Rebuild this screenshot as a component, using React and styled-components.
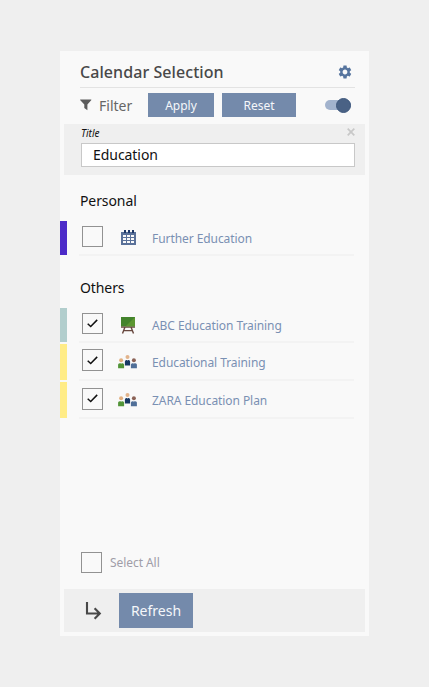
import React, { useState } from 'react'
import styled, { createGlobalStyle, ThemeProvider } from 'styled-components'

const theme = {
  colors: {
    page: '#efefef',
    panel: '#f9f9f9',
    primary: '#748aab',
    name: '#7a90b3',
    dark: '#4a6285',
    text: '#484848',
    muted: '#a09da8',
    line: '#f3f3f3',
  },
}

const GlobalStyle = createGlobalStyle`
  * {
    box-sizing: border-box;
  }
  body {
    margin: 0;
    background: #efefef;
    font-family: 'Noto Sans', 'Open Sans', sans-serif;
  }
  button,
  input {
    font-family: inherit;
  }
`

const Page = styled.main`
  width: 429px;
  height: 687px;
  padding: 51px 60px;
  background: ${({ theme }) => theme.colors.page};
`

const Panel = styled.section`
  display: flex;
  flex-direction: column;
  width: 309px;
  height: 585px;
  padding-bottom: 4px;
  background: ${({ theme }) => theme.colors.panel};
`

const Header = styled.header`
  display: flex;
  align-items: center;
  justify-content: space-between;
  height: 37px;
  margin: 0 14px 0 20px;
  padding: 5px 2px 0 0;
  border-bottom: 1px solid #e3e3e3;
`

const Title = styled.h1`
  margin: 0;
  font-size: 16px;
  font-weight: 500;
  line-height: 22px;
  letter-spacing: 0.07px;
  color: ${({ theme }) => theme.colors.text};
`

const Toolbar = styled.div`
  display: flex;
  align-items: center;
  height: 24px;
  margin: 5px 18px 7px 20px;
`

const FilterLabel = styled.span`
  width: 49px;
  margin-left: 7px;
  padding-top: 2px;
  font-size: 14px;
  line-height: 24px;
  color: #666;
`

const Button = styled.button`
  width: ${({ $width }) => $width};
  height: ${({ $large }) => ($large ? '35px' : '24px')};
  margin-right: 8px;
  padding: ${({ $large }) => ($large ? '0' : '1px 0 0')};
  border: 0;
  background: ${({ theme }) => theme.colors.primary};
  color: #f5f7fa;
  font-size: ${({ $large }) => ($large ? '14px' : '12px')};
  line-height: 23px;
`

const Toggle = styled.button`
  display: flex;
  align-items: center;
  justify-content: flex-end;
  width: 26px;
  height: 10px;
  margin-left: auto;
  padding: 0;
  border: 0;
  border-radius: 5px;
  background: #a2b3cd;
`

const Knob = styled.span`
  flex: none;
  width: 15px;
  height: 15px;
  border-radius: 50%;
  background: ${({ theme }) => theme.colors.dark};
  border: 1px solid #3e587d;
`

const FilterBox = styled.div`
  height: 51px;
  margin: 0 4px;
  padding: 2px 10px 0 17px;
  background: ${({ theme }) => theme.colors.page};
`

const FilterHead = styled.div`
  display: flex;
  justify-content: space-between;
  height: 17px;
  font-size: 10px;
  font-style: italic;
  line-height: 15px;
  color: #111;
`

const Clear = styled.svg`
  width: 8px;
  height: 8px;
  margin-top: 2px;
`

const Input = styled.input`
  display: block;
  width: 274px;
  height: 24px;
  padding: 0 11px 2px;
  border: 1px solid #c8c8c8;
  border-radius: 0;
  outline: 0;
  background: #fff;
  color: #111;
  font-size: 14px;
  letter-spacing: -0.05px;
`

const Group = styled.section`
  padding-top: ${({ $top }) => $top};
`

const GroupTitle = styled.h2`
  margin: 0 0 10px 20px;
  font-size: 14px;
  font-weight: 400;
  line-height: 20px;
  letter-spacing: -0.1px;
  color: #111;
`

const Row = styled.div`
  display: flex;
  height: ${({ $height }) => $height};
  margin-bottom: 2px;
  border-left: 7px solid ${({ $color }) => $color};
`

const RowBody = styled.div`
  display: flex;
  align-items: center;
  width: 275px;
  height: 100%;
  margin-left: 12px;
  padding-left: 3px;
  box-shadow: 0 1px 0 ${({ theme }) => theme.colors.line}, inset 0 -1px 0 ${({ theme }) => theme.colors.line};
`

const Check = styled.button`
  display: grid;
  place-items: center;
  flex: none;
  width: 21px;
  height: ${({ $height = '21px' }) => $height};
  margin-bottom: ${({ $lift = '3px' }) => $lift};
  padding: 0;
  border: 1px solid #929292;
  background: transparent;
`

const IconSlot = styled.span`
  display: grid;
  place-items: center;
  width: 49px;
  padding: ${({ $icon }) => ({ calendar: '0 0 1px 1px', team: '0 0 1px' })[$icon] || '0'};
`

const Name = styled.span`
  padding-top: 2px;
  font-size: 12px;
  line-height: 18px;
  letter-spacing: -0.07px;
  color: ${({ theme }) => theme.colors.name};
`

const SelectAll = styled.div`
  display: flex;
  align-items: center;
  gap: 8px;
  height: 21px;
  margin: auto 0 16px 21px;
  color: ${({ theme }) => theme.colors.muted};
  font-size: 12px;
  letter-spacing: -0.06px;
`

const Footer = styled.footer`
  display: flex;
  align-items: center;
  gap: 17px;
  height: 43px;
  margin: 0 4px;
  padding-left: 21px;
  background: ${({ theme }) => theme.colors.page};
`

const GearIcon = () => (
  <svg width="16" height="16" viewBox="0 0 24 24" fill="#56749e">
    <path d="M19.14 12.94c.04-.3.06-.61.06-.94 0-.32-.02-.64-.07-.94l2.03-1.58c.18-.14.23-.41.12-.61l-1.92-3.32c-.12-.22-.37-.29-.59-.22l-2.39.96c-.5-.38-1.03-.7-1.62-.94l-.36-2.54c-.04-.24-.24-.41-.48-.41h-3.84c-.24 0-.43.17-.47.41l-.36 2.54c-.59.24-1.13.57-1.62.94l-2.39-.96c-.22-.08-.47 0-.59.22L2.74 8.87c-.12.21-.08.47.12.61l2.03 1.58c-.05.3-.09.63-.09.94s.02.64.07.94l-2.03 1.58c-.18.14-.23.41-.12.61l1.92 3.32c.12.22.37.29.59.22l2.39-.96c.5.38 1.03.7 1.62.94l.36 2.54c.05.24.24.41.48.41h3.84c.24 0 .44-.17.47-.41l.36-2.54c.59-.24 1.13-.56 1.62-.94l2.39.96c.22.08.47 0 .59-.22l1.92-3.32c.12-.22.07-.47-.12-.61l-2.01-1.58zM12 15.6c-1.98 0-3.6-1.62-3.6-3.6s1.62-3.6 3.6-3.6 3.6 1.62 3.6 3.6-1.62 3.6-3.6 3.6z" />
  </svg>
)

const FunnelIcon = () => (
  <svg width="12" height="12" viewBox="0 0 12 12" fill="#5c5c5c">
    <path d="M.5.5h10.4c.5 0 .6.5.3.8L7.4 5.5v5.7L4.3 9V5.5L.3 1.3C0 1 .1.5.5.5z" />
  </svg>
)

const CheckMark = () => (
  <svg width="11" height="9" viewBox="0 0 11 9" fill="none" stroke="#111" strokeWidth="1.5">
    <path d="M.7 4.8l3 2.7L10.2.9" />
  </svg>
)

const CalendarIcon = () => (
  <svg width="15" height="15" viewBox="0 0 15 15" shapeRendering="crispEdges">
    <path fill="#5a7199" d="M0 2h15v13H0z" />
    <path fill="#f9f9f9" d="M2 5h3v2H2zM6 5h3v2H6zM10 5h3v2h-3zM2 8h3v2H2zM6 8h3v2H6zM10 8h3v2h-3zM2 11h3v2H2zM6 11h3v2H6zM10 11h3v2h-3z" />
    <path fill="#1d3767" d="M3 0h2v3H3zM6.5 0h2v3h-2zM11 0h2v3h-2z" />
  </svg>
)

const BoardIcon = () => (
  <svg width="16" height="17" viewBox="0 0 16 17">
    <g fill="none" stroke="#68483f" strokeWidth="1.4">
      <path d="M1 10h14M5 10L2.5 16.6M11 10l2.5 6.6M3.7 13.6h8.6" />
    </g>
    <path fill="#43832c" d="M1 0h14v9.3H1z" />
    <path fill="#5c9631" d="M15 0v9.3H5.7z" />
  </svg>
)

const TeamIcon = () => (
  <svg width="19" height="14" viewBox="0 0 19 14">
    <circle cx="3.1" cy="5.3" r="2" fill="#e2b080" />
    <circle cx="9.5" cy="2.1" r="2" fill="#e2b48c" />
    <circle cx="15.9" cy="5.3" r="2" fill="#8b6256" />
    <path fill="#529438" d="M.1 13.3V9.8q0-1.6 1.6-1.6h2.8q1.6 0 1.6 1.6v3.500z" />
    <path fill="#173864" d="M6.900 10.400V6.700q0-1.600 1.600-1.600h2q1.600 0 1.600 1.600v3.700z" />
    <path fill="#506f98" d="M12.900 13.300V9.800q0-1.600 1.600-1.600h2.800q1.600 0 1.600 1.600v3.500z" />
    <path fill="#f4f4f4" d="M2.700 8.100h.8l-.4 1.100zM9.100 5h.8l-.4 1.100zM15.500 8.100h.8l-.4 1.100z" />
  </svg>
)

const ArrowIcon = () => (
  <svg width="17" height="18" viewBox="0 0 17 18" fill="none" stroke="#484848" strokeWidth="2.1">
    <path d="M2 0v11.500h13M9.600 6.200l5.200 5.300-5.200 5.300" />
  </svg>
)

const icons = { calendar: CalendarIcon, board: BoardIcon, team: TeamIcon }

const personal = [
  { name: 'Further Education', icon: 'calendar', color: '#4c2bc8', height: '34px' },
]

const others = [
  { name: 'ABC Education Training', icon: 'board', color: '#b2cecd', height: '34px', checked: true },
  { name: 'Educational Training', icon: 'team', color: '#ffec87', height: '36px', boxHeight: '22px', lift: '4px', checked: true },
  { name: 'ZARA Education Plan', icon: 'team', color: '#ffec87', height: '36px', boxHeight: '22px', checked: true },
]

const CalendarRow = ({ name, icon, color, height, boxHeight, lift, checked: initial = false }) => {
  const [checked, setChecked] = useState(initial)
  const Icon = icons[icon]
  return (
    <Row $color={color} $height={height}>
      <RowBody>
        <Check $height={boxHeight} $lift={lift} role="checkbox" aria-checked={checked} aria-label={name} onClick={() => setChecked(!checked)}>
          {checked && <CheckMark />}
        </Check>
        <IconSlot $icon={icon}><Icon /></IconSlot>
        <Name>{name}</Name>
      </RowBody>
    </Row>
  )
}

const App = () => {
  const [filter, setFilter] = useState('Education')
  return (
    <ThemeProvider theme={theme}>
      <GlobalStyle />
      <Page>
        <Panel>
          <Header>
            <Title>Calendar Selection</Title>
            <GearIcon />
          </Header>
          <Toolbar>
            <FunnelIcon />
            <FilterLabel>Filter</FilterLabel>
            <Button $width="66px">Apply</Button>
            <Button $width="74px">Reset</Button>
            <Toggle aria-label="Filter enabled"><Knob /></Toggle>
          </Toolbar>
          <FilterBox>
            <FilterHead>
              <span>Title</span>
              <Clear viewBox="0 0 8 8" stroke="#c8c8c8" strokeWidth="1.7" onClick={() => setFilter('')}>
                <path d="M.7.7l6.6 6.6M7.3.7L.7 7.3" />
              </Clear>
            </FilterHead>
            <Input value={filter} onChange={(e) => setFilter(e.target.value)} />
          </FilterBox>
          <Group $top="16px">
            <GroupTitle>Personal</GroupTitle>
            {personal.map((item) => <CalendarRow key={item.name} {...item} />)}
          </Group>
          <Group $top="21px">
            <GroupTitle>Others</GroupTitle>
            {others.map((item) => <CalendarRow key={item.name} {...item} />)}
          </Group>
          <SelectAll>
            <Check $lift="0" role="checkbox" aria-checked={false} aria-label="Select All" />
            Select All
          </SelectAll>
          <Footer>
            <ArrowIcon />
            <Button $large $width="74px">Refresh</Button>
          </Footer>
        </Panel>
      </Page>
    </ThemeProvider>
  )
}

export default App
